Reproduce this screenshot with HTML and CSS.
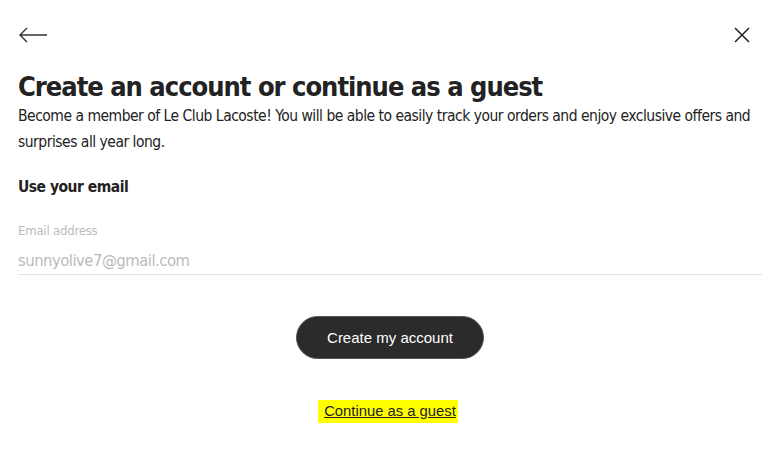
FILE: index.html
```html
<!DOCTYPE html>
<html lang="en">
<head>
  <meta charset="UTF-8">
  <title>Create an account</title>
  <link rel="stylesheet" href="styles.css">
</head>
<body>

<div class="modal">
  <div class="topbar">
    <button class="icon-btn" aria-label="Back">
      <svg width="30" height="16" viewBox="0 0 30 16">
        <path d="M29 8H2M9 1L2 8l7 7" fill="none" stroke="#333" stroke-width="1.4"/>
      </svg>
    </button>
    <button class="icon-btn" aria-label="Close">
      <svg width="16" height="16" viewBox="0 0 16 16">
        <path d="M1 1l14 14M15 1L1 15" fill="none" stroke="#222" stroke-width="1.5"/>
      </svg>
    </button>
  </div>

  <h1 class="title">Create an account or continue as a guest</h1>
  <p class="intro">Become a member of Le Club Lacoste! You will be able to easily track your orders and enjoy exclusive offers and surprises all year long.</p>

  <h2 class="subtitle">Use your email</h2>

  <div class="field">
    <label for="email">Email address</label>
    <input type="email" id="email" value="sunnyolive7@gmail.com">
  </div>

  <div class="actions">
    <button class="primary-button">Create my account</button>
    <a href="#" class="guest-link">Continue as a guest</a>
  </div>
</div>

</body>
</html>
```

FILE: styles.css
```css
body {
  margin: 0;
  padding: 0;
  background-color: white;
  font-family: "DejaVu Sans Condensed", sans-serif;
  color: #222;
}
.modal {
  padding: 27px 8px 0 18px;
}
.topbar {
  display: flex;
  justify-content: space-between;
  align-items: center;
  padding-right: 12px;
}
.icon-btn {
  background: none;
  border: none;
  padding: 0;
  cursor: pointer;
  display: flex;
}
.title {
  font-size: 27px;
  font-weight: bold;
  letter-spacing: -1px;
  margin: 28px 0 0;
  line-height: 32px;
  color: #222;
}
.intro {
  font-size: 15.5px;
  letter-spacing: -0.5px;
  line-height: 26px;
  margin: 0;
}
.subtitle {
  font-size: 15.5px;
  font-weight: bold;
  letter-spacing: -0.5px;
  margin: 20px 0 0;
  line-height: 24px;
}
.field {
  margin-top: 24px;
  display: flex;
  flex-direction: column;
}
.field label {
  font-size: 13px;
  letter-spacing: -0.2px;
  color: #bbb;
  line-height: 16px;
}
.field input {
  font-family: inherit;
  font-size: 16.5px;
  letter-spacing: -0.5px;
  color: #bbb;
  border: none;
  border-bottom: 1px solid #e3e3e3;
  padding: 12px 0 4px;
  outline: none;
}
.actions {
  display: flex;
  flex-direction: column;
  align-items: center;
  margin-top: 41px;
}
.primary-button {
  background-color: #2b2b2b;
  color: white;
  border: 1px solid #555;
  border-radius: 22px;
  height: 43px;
  width: 188px;
  font-family: "Liberation Sans", Arial, sans-serif;
  font-size: 15px;
  cursor: pointer;
}
.guest-link {
  margin: 41px 4px 0 0;
  font-family: "Liberation Sans", Arial, sans-serif;
  font-size: 14.8px;
  color: #222;
  background-color: #ffff00;
  padding: 3px 2px 4px 6px;
}
```
